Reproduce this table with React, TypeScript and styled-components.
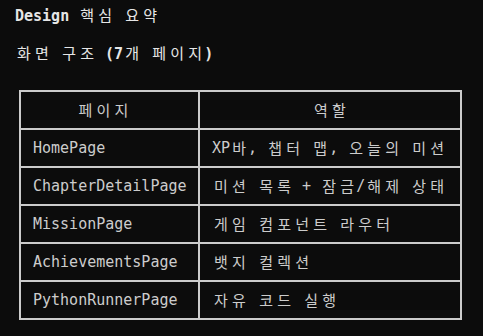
import React from "react";
import styled, { createGlobalStyle } from "styled-components";

const Global = createGlobalStyle`
  html, body { margin: 0; padding: 0; background: #0c0c0c; }
  body { width: 483px; height: 336px; overflow: hidden; }
`;

const Page = styled.div`
  display: flex;
  flex-direction: column;
  padding: 5px 0 0 15px;
  color: #cccccc;
  font-family: "DejaVu Sans Mono", "Liberation Mono", monospace;
  font-size: 15px;
  line-height: 20px;
`;

const Heading = styled.div<{ $gap: number }>`
  margin-bottom: ${(p) => p.$gap}px;
  color: #e6e6e6;
  font-weight: bold;
  white-space: pre;
  height: 20px;
`;

const Table = styled.div`
  margin-left: 4px;
  display: grid;
  grid-template-columns: 177px 260px;
  grid-auto-rows: 36px;
  gap: 2px;
  padding: 2px;
  width: max-content;
  background: #cccccc;
`;

const Cell = styled.div<{ $head?: boolean; $shift?: number }>`
  background: #0c0c0c;
  display: flex;
  align-items: center;
  justify-content: ${(p) => (p.$head ? "center" : "flex-start")};
  padding: 0 ${(p) => (p.$shift ? p.$shift : 0)}px 0 ${(p) => (p.$head ? 0 : 12)}px;
  white-space: pre;
  color: #cccccc;
`;

const Wide = styled.span`
  display: inline-block;
  width: 18px;
  text-align: center;
  font-family: "Noto Sans CJK KR", "DejaVu Sans", sans-serif;
  font-size: 15px;
  font-weight: normal;
`;

const Run = styled.span``;

const isWide = (ch: string) => /[\u1100-\u11ff\u3130-\u318f\uac00-\ud7af]/.test(ch);

function Term({ text }: { text: string }) {
  const parts: React.ReactNode[] = [];
  let buf = "";
  let k = 0;
  for (const ch of text) {
    if (isWide(ch)) {
      if (buf) {
        parts.push(<Run key={k++}>{buf}</Run>);
        buf = "";
      }
      parts.push(<Wide key={k++}>{ch}</Wide>);
    } else {
      buf += ch;
    }
  }
  if (buf) parts.push(<Run key={k++}>{buf}</Run>);
  return <>{parts}</>;
}

const rows: [string, string][] = [
  ["HomePage", "XP바, 챕터 맵, 오늘의 미션"],
  ["ChapterDetailPage", "미션 목록 + 잠금/해제 상태"],
  ["MissionPage", "게임 컴포넌트 라우터"],
  ["AchievementsPage", "뱃지 컬렉션"],
  ["PythonRunnerPage", "자유 코드 실행"],
];

export default function App() {
  return (
    <>
      <Global />
      <Page>
        <Heading $gap={18}>
          <Term text="Design 핵심 요약" />
        </Heading>
        <Heading $gap={27}>
          <Term text="화면 구조 (7개 페이지)" />
        </Heading>
        <Table>
          <Cell $head $shift={12}>
            <Term text="페이지" />
          </Cell>
          <Cell $head>
            <Term text="역할" />
          </Cell>
          {rows.map(([a, b]) => (
            <React.Fragment key={a}>
              <Cell>
                <Term text={a} />
              </Cell>
              <Cell>
                <Term text={b} />
              </Cell>
            </React.Fragment>
          ))}
        </Table>
      </Page>
    </>
  );
}
